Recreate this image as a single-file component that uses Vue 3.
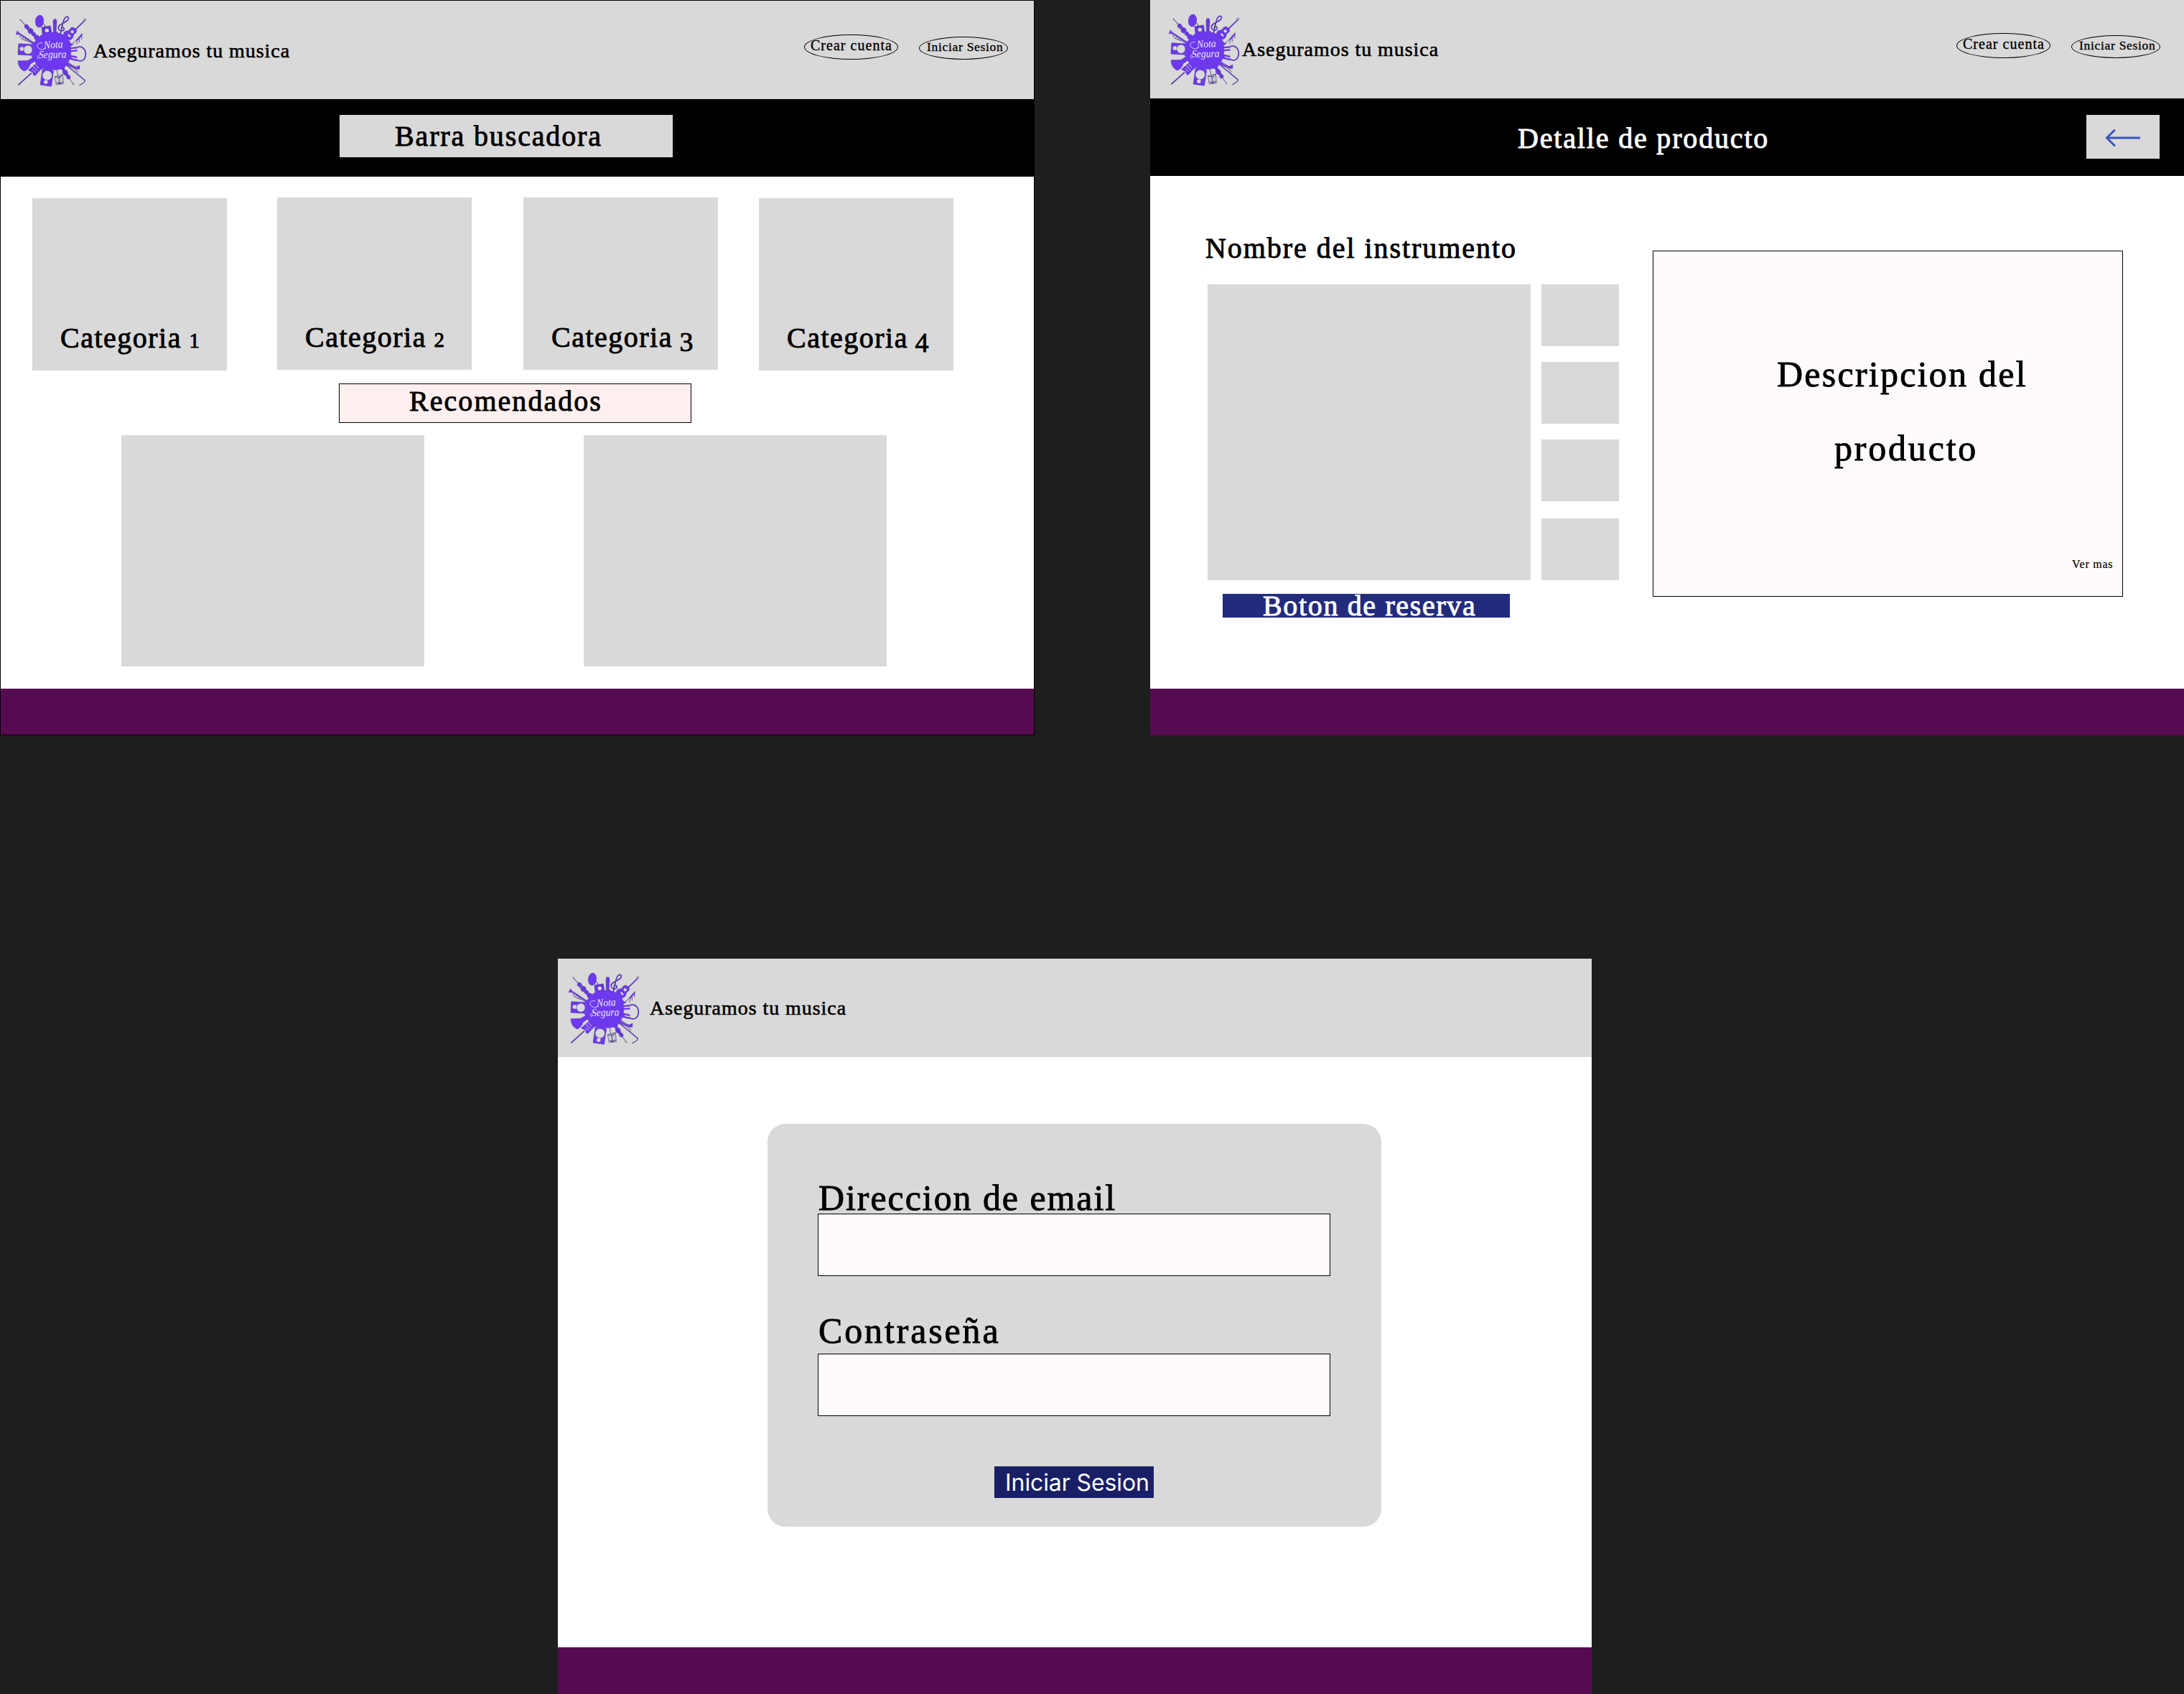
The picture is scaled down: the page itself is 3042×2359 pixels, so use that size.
<script setup>
import { h } from 'vue'

const categories = [
  { name: 'Categoria', digit: '1', old: 'short', x: 0, drop: 1 },
  { name: 'Categoria', digit: '2', old: 'short', x: 70, drop: 0 },
  { name: 'Categoria', digit: '3', old: 'long', x: 72, drop: 0 },
  { name: 'Categoria', digit: '4', old: 'long', x: 57, drop: 1 },
]

const violet = '#6d38ee'
const shade = '#4a3a86'

function violin(transform) {
  return h('g', { transform }, [
    h('path', { d: 'M0-54V-10', stroke: shade, 'stroke-width': 3 }),
    h('path', { d: 'M-3-54h6v7h-6z', fill: '#77738c' }),
    h('path', {
      d: 'M0-22C10-22 13-15 9-7C6-2 8 1 12 6C17 16 10 23 0 23S-17 16-12 6C-8 1-6-2-9-7C-13-15-10-22 0-22Z',
      fill: violet, stroke: shade, 'stroke-width': 1,
    }),
    h('path', { d: 'M-2-22V12M3-18V10M-6 12H6', stroke: shade, 'stroke-width': 1.5 }),
  ])
}

function speaker(transform, w, hgt, rBig, rSmall) {
  return h('g', { transform }, [
    h('rect', { x: -w / 2, y: -hgt / 2, width: w, height: hgt, rx: 2, fill: violet, stroke: shade, 'stroke-width': 1.5 }),
    h('circle', { cx: 0, cy: -hgt / 2 + rBig + 3, r: rBig, fill: '#d9d9d9', stroke: shade, 'stroke-width': 1 }),
    h('circle', { cx: -2, cy: hgt / 2 - rSmall - 6, r: rSmall, fill: '#d9d9d9', stroke: shade, 'stroke-width': 1 }),
  ])
}

const Logo = () =>
  h('svg', { viewBox: '60 60 306 306', width: 102, height: 102, fill: 'none', role: 'img' }, [
    // upper left: violin, trumpet, maraca, amplifier
    violin('translate(120 121) rotate(-42) scale(.82 1)'),
    violin('translate(147 150) rotate(-42) scale(.8)'),
    h('path', { d: 'M66 144L73 128L80 137L142 178L139 182L78 143Z', fill: violet, stroke: shade, 'stroke-width': 1 }),
    h('path', { d: 'M82 148L91 163L138 181M100 152l-5 10M109 158l-5 11M118 163l-5 11', stroke: shade, 'stroke-width': 2.5 }),
    h('ellipse', { cx: 165, cy: 89, rx: 17.5, ry: 26, fill: violet, stroke: shade, 'stroke-width': 1, transform: 'rotate(6 165 89)' }),
    h('path', { d: 'M181 99Q190 101 188 113', stroke: shade, 'stroke-width': 3 }),
    h('path', { d: 'M174 114L211 108L216 143L178 149Z', fill: violet, stroke: shade, 'stroke-width': 2 }),
    h('circle', { cx: 196, cy: 127, r: 14, stroke: shade, 'stroke-width': 2 }),
    h('circle', { cx: 196, cy: 127, r: 8, fill: '#d9d9d9' }),
    // top: microphone and treble clef
    h('path', { d: 'M222 92C220 75 239 75 237 92L234 138H223Z', fill: violet, stroke: shade, 'stroke-width': 1.5 }),
    h('path', { d: 'M222 95h15', stroke: shade, 'stroke-width': 2 }),
    h('path', {
      d: 'M253 140L262 99M256 119C257 111 268 113 268 121C268 132 247 132 244 118C239 98 281 97 286 79C289 68 276 67 270 77C266 84 264 91 262 99',
      stroke: shade, 'stroke-width': 5, 'stroke-linecap': 'round',
    }),
    h('path', {
      d: 'M256 119C257 111 268 113 268 121C268 132 247 132 244 118C239 98 281 97 286 79C289 68 276 67 270 77C266 84 264 91 262 99',
      stroke: violet, 'stroke-width': 3, 'stroke-linecap': 'round',
    }),
    // upper right: guitar and notes
    h('path', { d: 'M308 130L356 84', stroke: shade, 'stroke-width': 5 }),
    h('path', { d: 'M308 130L350 90', stroke: violet, 'stroke-width': 3.5 }),
    h('path', { d: 'M348 84l8-7l5 4l-7 9z', fill: '#aaa6b8', stroke: shade, 'stroke-width': 1.5 }),
    h('path', {
      d: 'M297 116C306 111 321 120 320 131C320 140 306 140 306 151C305 163 293 170 284 166L266 147C263 137 271 129 282 129C291 129 290 120 297 116Z',
      fill: violet, stroke: shade, 'stroke-width': 1.5,
    }),
    h('circle', { cx: 302, cy: 133, r: 7, fill: '#d9d9d9', stroke: shade, 'stroke-width': 1 }),
    h('ellipse', { cx: 289, cy: 149, rx: 4, ry: 8, fill: '#d9d9d9', transform: 'rotate(-42 289 149)' }),
    h('path', { d: 'M300 188L343 140L341 165M321 164V187M331 154V178M305 185q-12 5 2-6', stroke: shade, 'stroke-width': 2.5 }),
    h('path', { d: 'M322 164l19-23v10l-19 22z', fill: violet }),
    // right: headphones
    h('path', { d: 'M316 202C336 187 358 201 358 226C358 252 337 263 318 248', stroke: shade, 'stroke-width': 5 }),
    h('path', { d: 'M316 202C336 187 358 201 358 226C358 252 337 263 318 248', stroke: violet, 'stroke-width': 3 }),
    h('path', { d: 'M290 202L318 199M290 214L323 211M290 232L322 240M290 244L320 252', stroke: violet, 'stroke-width': 7 }),
    // lower right: saxophone, flute, violin, drum
    h('path', { d: 'M283 262L318 280L333 273V289C318 292 298 283 277 270Z', fill: violet, stroke: shade, 'stroke-width': 1 }),
    h('path', { d: 'M272 268L355 336Q357 344 331 357', stroke: shade, 'stroke-width': 4 }),
    h('path', { d: 'M272 268L354 335', stroke: violet, 'stroke-width': 2.5 }),
    h('path', { d: 'M288 262L328 304', stroke: '#77738c', 'stroke-width': 6, 'stroke-dasharray': '5 3' }),
    violin('translate(279 312) rotate(145) scale(.75 .95)'),
    violin('translate(264 290) rotate(150) scale(.6)'),
    h('path', { d: 'M229 320L262 311L265 350L235 354Z', fill: '#cbc9d2', stroke: shade, 'stroke-width': 2 }),
    h('path', { d: 'M229 320Q244 327 262 314M236 345Q250 351 264 343M242 325l12-2M246 325l4 24M243 350l13-2', stroke: shade, 'stroke-width': 3 }),
    h('path', { d: 'M237 290L242 316', stroke: shade, 'stroke-width': 2.5 }),
    // bottom and left: speakers, horn, electric guitar
    speaker('translate(196 325) rotate(8)', 47, 66, 20, 9),
    speaker('translate(107 207) rotate(93)', 46, 62, 18, 9),
    h('path', { d: 'M75 254L116 253L152 232L162 245L126 269C124 280 114 294 100 297C84 288 75 273 75 254Z', fill: violet, stroke: shade, 'stroke-width': 1 }),
    h('path', { d: 'M76 355L132 305', stroke: shade, 'stroke-width': 5 }),
    h('path', { d: 'M86 346L132 305', stroke: violet, 'stroke-width': 3 }),
    h('path', { d: 'M118 293L152 263L174 282L170 291L146 317L138 311L137 302Z', fill: violet, stroke: shade, 'stroke-width': 1 }),
    h('path', { d: 'M137 276L158 297M146 268L163 286M136 290l13 13', stroke: '#d9d9d9', 'stroke-width': 3 }),
    // centre splat with the brand name
    h('path', {
      d: 'M218 136C226 134 234 136 239 132L243 138C255 139 264 145 272 151L283 158C288 168 291 174 295 180L304 186L295 194C297 206 297 220 295 234L302 244L290 249C286 264 276 274 270 282L270 292L260 286C250 291 234 293 224 292L205 296L178 286L171 291L165 278C150 268 145 256 142 244L132 236L139 226C137 214 138 202 141 194L134 183L146 174C154 160 166 149 180 143L196 139Z',
      fill: violet, stroke: '#5d38c4', 'stroke-width': 1,
    }),
    h('g', { stroke: '#eae6f6', 'stroke-width': 2.5, 'stroke-linecap': 'round' }, [
      h('path', { d: 'M190 201C182 212 166 207 157 197C151 186 164 175 176 180' }),
      h('path', { d: 'M162 246C149 240 160 227 176 227' }),
    ]),
    h('text', { class: 'brand-word', x: 184, y: 203, textLength: 80, lengthAdjust: 'spacingAndGlyphs', transform: 'rotate(-3 184 203)' }, 'Nota'),
    h('text', { class: 'brand-word', x: 162, y: 243, textLength: 116, lengthAdjust: 'spacingAndGlyphs', transform: 'rotate(-1 162 243)' }, 'Segura'),
  ])
</script>

<template>
  <main class="canvas">
    <div class="top-row">
      <section class="frame home">
        <header class="header">
          <Logo class="logo" />
          <p class="slogan">Aseguramos tu musica</p>
          <nav class="account">
            <a class="pill create"><span>Crear cuenta</span></a>
            <a class="pill login"><span>Iniciar Sesion</span></a>
          </nav>
        </header>
        <div class="band">
          <div class="search"><span>Barra buscadora</span></div>
        </div>
        <div class="home-body">
          <div class="categories">
            <article
              v-for="c in categories"
              :key="c.digit"
              class="category"
              :style="{ marginLeft: c.x + 'px', marginTop: c.drop + 'px' }"
            >
              <h2 class="cat-name">{{ c.name }} <span :class="['digit', c.old]">{{ c.digit }}</span></h2>
            </article>
          </div>
          <div class="recommended"><span>Recomendados</span></div>
          <div class="picks">
            <div class="pick"></div>
            <div class="pick"></div>
          </div>
        </div>
        <footer class="footer"></footer>
      </section>

      <section class="frame detail">
        <header class="header">
          <Logo class="logo" />
          <p class="slogan">Aseguramos tu musica</p>
          <nav class="account">
            <a class="pill create"><span>Crear cuenta</span></a>
            <a class="pill login"><span>Iniciar Sesion</span></a>
          </nav>
        </header>
        <div class="band">
          <h1 class="t-detail">Detalle de producto</h1>
          <button class="back" aria-label="Volver">
            <svg width="50" height="26" viewBox="0 0 50 26" fill="none" stroke="#3a55c0" stroke-width="3">
              <path d="M2 13H49" />
              <path d="M13 2.5L2.5 13L13 23.5" stroke-linecap="round" />
            </svg>
          </button>
        </div>
        <div class="detail-body">
          <div class="product">
            <h2 class="t-name">Nombre del instrumento</h2>
            <div class="gallery">
              <div class="photo"></div>
              <div class="thumbs">
                <div v-for="n in 4" :key="n" class="thumb"></div>
              </div>
            </div>
            <button class="reserve"><span>Boton de reserva</span></button>
          </div>
          <div class="description">
            <p class="desc-line first">Descripcion del</p>
            <p class="desc-line second">producto</p>
            <a class="more">Ver mas</a>
          </div>
        </div>
        <footer class="footer"></footer>
      </section>
    </div>

    <section class="frame signin">
      <header class="header">
        <Logo class="logo" />
        <p class="slogan">Aseguramos tu musica</p>
      </header>
      <div class="signin-body">
        <form class="card">
          <label class="label email">Direccion de email</label>
          <div class="input"></div>
          <label class="label pass">Contraseña</label>
          <div class="input"></div>
          <button type="button" class="submit">Iniciar Sesion</button>
        </form>
      </div>
      <footer class="footer"></footer>
    </section>
  </main>
</template>

<style>
html,
body {
  margin: 0;
  background: #1e1e1e;
}
.brand-word {
  font: italic 400 45px 'Liberation Serif', serif;
  fill: #eae6f6;
  -webkit-text-stroke: 1px #eae6f6;
}
</style>

<style scoped>
.canvas {
  width: 3042px;
  height: 2359px;
  overflow: hidden;
  background: #1e1e1e;
  color: #000;
  font-family: 'Liberation Serif', serif;
  font-size: 40px;
  line-height: 1;
  white-space: nowrap;
  -webkit-text-stroke: 0.9px currentColor;
}
.canvas * {
  box-sizing: border-box;
}
h1,
h2,
p {
  margin: 0;
  font-size: inherit;
  font-weight: 400;
}
button {
  border: 0;
  padding: 0;
  font: inherit;
  color: inherit;
  border-radius: 0;
}
.top-row {
  display: flex;
  justify-content: space-between;
}
.frame {
  display: flex;
  flex-direction: column;
  width: 1440px;
  height: 1024px;
  background: #fff;
}
.home {
  width: 1441px;
  border: 1px solid #000;
}
.header {
  display: flex;
  align-items: flex-start;
  height: 137px;
  flex: none;
  background: #d9d9d9;
}
.logo {
  flex: none;
  margin: 19px 0 0 24px;
}
.home .logo {
  margin-left: 19px;
}
.signin .logo {
  margin-left: 13px;
}
.slogan {
  width: 280px;
  margin: 55px 0 0 2px;
  font-size: 28px;
  letter-spacing: 0.95px;
  -webkit-text-stroke-width: 0.6px;
}
.home .slogan {
  margin: 56px 0 0 8px;
}
.signin .slogan {
  margin-left: 13px;
}
.account {
  display: flex;
  align-items: flex-start;
  gap: 29px;
  margin: 46px 33px 0 auto;
  -webkit-text-stroke-width: 0.35px;
}
.home .account {
  margin: 47px 36px 0 auto;
}
.pill {
  border: 1px solid #000;
  border-radius: 50%;
}
.create {
  width: 131px;
  height: 35px;
  padding: 4px 0 0 8px;
  font-size: 20px;
  letter-spacing: 1.03px;
}
.login {
  width: 124px;
  height: 32px;
  margin-top: 3px;
  padding: 5px 0 0 10px;
  font-size: 17.5px;
  letter-spacing: 0.7px;
}
.pill span {
  display: block;
}
.band {
  display: flex;
  flex: none;
  height: 108px;
  background: #000;
}
.search {
  width: 464px;
  height: 59px;
  margin: 22px 0 0 472px;
  padding: 10px 0 0 77px;
  background: #d9d9d9;
  letter-spacing: 1.86px;
}
.search span {
  display: block;
}
.home-body {
  flex: 1;
}
.categories {
  display: flex;
  height: 270px;
  padding: 29px 0 0 44px;
}
.category {
  width: 271px;
  height: 240px;
  padding: 175px 0 0 39px;
  background: #d9d9d9;
}
.cat-name {
  height: 50px;
  letter-spacing: 1.5px;
}
.digit {
  font-size: 29px;
  margin-left: -1px;
}
.digit.long {
  font-size: 38px;
  margin-left: -2px;
  vertical-align: -6px;
}
.recommended {
  width: 491px;
  height: 55px;
  margin: 18px 0 0 471px;
  padding: 4px 0 0 97px;
  border: 1px solid #000;
  background: #ffefef;
  letter-spacing: 2.05px;
}
.recommended span {
  display: block;
}
.picks {
  display: flex;
  gap: 222px;
  padding: 17px 0 0 168px;
}
.pick {
  width: 422px;
  height: 322px;
  background: #d9d9d9;
}
.footer {
  flex: none;
  height: 65px;
  background: #560b51;
}
.home .footer {
  height: 64px;
}
.t-detail {
  margin: 36px 0 0 512px;
  color: #fff;
  letter-spacing: 1.83px;
}
.back {
  display: flex;
  align-items: center;
  justify-content: center;
  width: 102px;
  height: 61px;
  margin: 23px 34px 0 auto;
  padding: 2px 0 0 0;
  background: #d9d9d9;
}
.detail-body {
  display: flex;
  flex: 1;
  padding-left: 80px;
}
.product {
  width: 573px;
}
.t-name {
  margin: 81px 0 0 -3px;
  height: 70px;
  letter-spacing: 1.95px;
}
.gallery {
  display: flex;
  gap: 15px;
}
.photo {
  width: 450px;
  height: 412px;
  background: #d9d9d9;
}
.thumbs {
  display: flex;
  flex-direction: column;
  gap: 22px;
}
.thumb {
  width: 108px;
  height: 86px;
  background: #d9d9d9;
}
.thumb:last-child {
  margin-top: 2px;
}
.reserve {
  display: block;
  width: 400px;
  height: 33px;
  margin: 19px 0 0 21px;
  padding: 0 0 0 56px;
  background: #232b7c;
  color: #fff;
  text-align: left;
  letter-spacing: 1.65px;
  line-height: 34px;
}
.reserve span {
  display: block;
  height: 33px;
}
.description {
  display: flex;
  flex-direction: column;
  width: 655px;
  height: 482px;
  margin: 104px 0 0 47px;
  border: 1px solid #000;
  background: #fffbfb;
}
.desc-line {
  font-size: 50px;
}
.first {
  margin: 146px 0 0 172px;
  letter-spacing: 2.25px;
}
.second {
  margin: 53px 0 0 252px;
  letter-spacing: 2.8px;
}
.more {
  margin: 129px 0 0 583px;
  font-size: 16px;
  letter-spacing: 0.75px;
  -webkit-text-stroke-width: 0.2px;
}
.signin {
  margin: 311px 0 0 777px;
}
.signin-body {
  flex: 1;
  padding: 93px 0 0 292px;
}
.card {
  display: flex;
  flex-direction: column;
  width: 855px;
  height: 561px;
  padding: 78px 71px 0 70px;
  border-radius: 25px;
  background: #d9d9d9;
}
.label {
  font-size: 50px;
  margin-left: 1px;
}
.email {
  height: 47px;
  letter-spacing: 1.93px;
}
.pass {
  height: 57px;
  margin-top: 51px;
  letter-spacing: 2.85px;
}
.input {
  height: 87px;
  border: 1px solid #000;
  background: #fffbfb;
}
.submit {
  width: 222px;
  height: 44px;
  margin: 70px 0 0 246px;
  padding: 2px 0 0 9px;
  background: #191f65;
  color: #fff;
  font-family: Inter, sans-serif;
  font-size: 32px;
  letter-spacing: -0.1px;
  line-height: 42px;
  -webkit-text-stroke: 0;
}
</style>
